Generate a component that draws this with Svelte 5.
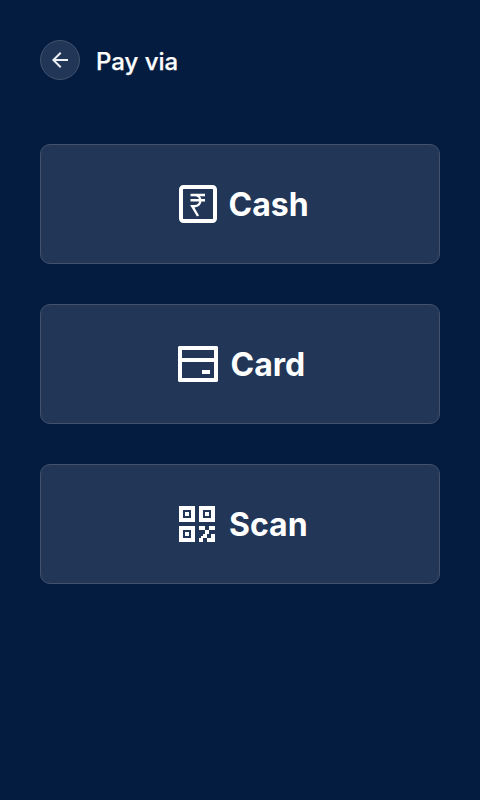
<script>
  const methods = ['Cash', 'Card', 'Scan'];
</script>

<main>
  <header>
    <button class="back" aria-label="Back">
      <svg width="16" height="16" viewBox="0 0 16 16" fill="#eef1f5">
        <path d="M16 7H3.83l5.59-5.59L8 0 0 8l8 8 1.41-1.41L3.83 9H16V7z" />
      </svg>
    </button>
    <h1>Pay via</h1>
  </header>

  <div class="methods">
    {#each methods as method}
      <button class="method {method.toLowerCase()}">
        {#if method === 'Cash'}
          <svg width="38" height="38" viewBox="0 0 38 38" fill="none" stroke="#fff">
            <rect x="2" y="2" width="34" height="34" rx="2.5" stroke-width="4" />
            <path d="M11.5 10H26M11.5 15.2H26M12 10h3.5c7.8 0 7.8 11.2 0 11.2H13.2L19 31" stroke-width="2.4" />
          </svg>
        {:else if method === 'Card'}
          <svg width="40" height="36" viewBox="0 0 40 36" fill="#fff">
            <path fill-rule="evenodd" d="M1 0H39L40 1V35L39 36H1L0 35V1ZM4 4V12H36V4ZM4 16V32H36V16ZM24 24H32V28H24Z" />
          </svg>
        {:else}
          <svg width="36" height="36" viewBox="0 0 36 36" fill="#fff" shape-rendering="crispEdges">
            <path fill-rule="evenodd" d="M0 0H16V16H0ZM4 4V12H12V4ZM6 6H10V10H6ZM20 0H36V16H20ZM24 4V12H32V4ZM26 6H30V10H26ZM0 20H16V36H0ZM4 24V32H12V24ZM6 26H10V30H6Z" />
            <path d="M20 20H26V24H20ZM30 20H36V24H30ZM26 24H30V28H28V32H24V36H20V32H22V30H24V28H26ZM32 28H36V36H28V32H32Z" />
          </svg>
        {/if}
        <span>{method}</span>
      </button>
    {/each}
  </div>
</main>

<style>
  :global(body) { background: #031c40; }
  main {
    box-sizing: border-box;
    min-height: 800px;
    padding: 40px;
    background: #031c40;
    color: #fff;
    font-family: Inter, sans-serif;
  }
  header { display: flex; align-items: center; gap: 16px; height: 40px; }
  h1 { margin: 3px 0 0; font-size: 24px; line-height: 32px; font-weight: 500; -webkit-text-stroke: 0.25px #fff; }
  button {
    box-sizing: border-box;
    display: flex;
    align-items: center;
    padding: 0;
    border: 1px solid #42526e;
    background: #223757;
    color: inherit;
    font: inherit;
  }
  .back { width: 40px; height: 40px; justify-content: center; border-radius: 50%; }
  .methods { display: flex; flex-direction: column; gap: 40px; margin-top: 64px; }
  .method { height: 120px; padding-left: 138px; border-radius: 10px; gap: 11.5px; }
  .method.card { padding-left: 137px; gap: 12.5px; }
  .method.scan { gap: 14px; }
  span { font-size: 32px; line-height: 40px; font-weight: 700; margin-top: 2px; }
</style>
